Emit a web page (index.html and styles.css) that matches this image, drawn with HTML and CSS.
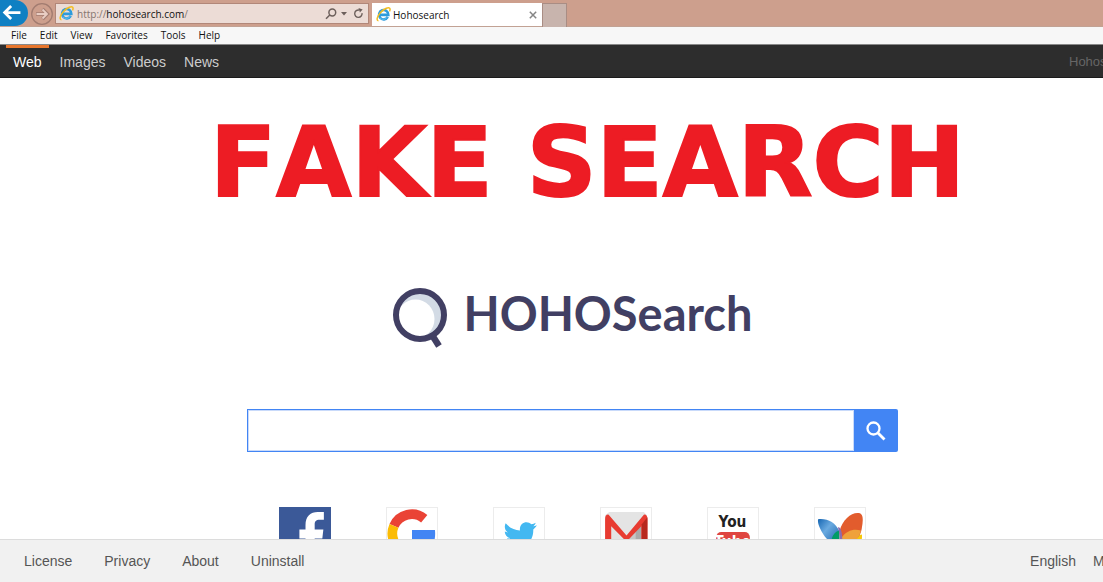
FILE: index.html
```html
<!DOCTYPE html>
<html lang="en">
<head>
<meta charset="utf-8">
<title>Hohosearch</title>
<link rel="stylesheet" href="styles.css">
</head>
<body>
<svg class="defs" aria-hidden="true">
  <defs>
    <symbol id="ie" viewBox="0 0 16 16">
      <path d="M12.6 10.6A5 5 0 1 1 13.2 8.4H4.6" fill="none" stroke="#2d9bdc" stroke-width="2.7"/>
      <path d="M12 10.8A4.9 4.9 0 0 1 4 11.5" fill="none" stroke="#63c3f1" stroke-width="1"/>
      <path d="M2.6 14.6C.2 14.4 1 10.4 4.600 6.200 8.200 2 13.200-.2 14.600 1.400c.7.800.4 2-.2 3.200" fill="none" stroke="#f3bd20" stroke-width="1.600"/>
    </symbol>
  </defs>
</svg>

<header class="chrome">
  <button class="back" aria-label="Back"><svg viewBox="0 0 28 28"><path d="M22 13.500H6M12 6.500l-7 7 7 7" fill="none" stroke="#fff" stroke-width="3"/></svg></button>
  <button class="forward" aria-label="Forward"><svg viewBox="0 0 24 24"><circle cx="12" cy="12" r="10.300" fill="none" stroke="#a27c70" stroke-width="1.300"/><path d="M6 12h11M12.500 7l5 5-5 5" fill="none" stroke="#a27c70" stroke-width="3.400"/><path d="M6.500 12h10M12.500 7.500l4.500 4.500-4.500 4.500" fill="none" stroke="#e8cdc3" stroke-width="1.800"/></svg></button>
  <div class="address">
    <svg class="favicon"><use href="#ie"/></svg>
    <span class="url">http://<b>hohosearch.com</b>/</span>
    <button class="tool search-tool" aria-label="Search"><svg viewBox="0 0 12 12"><circle cx="7.300" cy="4.500" r="3.400"/><path d="M4.800 7L1 10.800"/></svg></button>
    <button class="tool menu-tool" aria-label="Show address list"><svg viewBox="0 0 6 6"><path class="solid" d="M0 1h6L3 4.500z"/></svg></button>
    <button class="tool refresh-tool" aria-label="Refresh"><svg viewBox="0 0 12 12"><path d="M9.800 5.500a4 4 0 1 1-3-3.200"/><path class="solid" d="M6 0l4.500 1.500L7.500 5z"/></svg></button>
  </div>
  <div class="tab">
    <svg class="favicon"><use href="#ie"/></svg>
    <span class="tab-title">Hohosearch</span>
    <button class="tab-close" aria-label="Close tab"><svg viewBox="0 0 8 8"><path d="M.8.8l6.400 6.400M7.200.8L.8 7.200" stroke="#858585" stroke-width="1.500"/></svg></button>
  </div>
  <button class="new-tab" aria-label="New tab"></button>
</header>

<div class="menubar">
  <button>File</button><button>Edit</button><button>View</button><button>Favorites</button><button>Tools</button><button>Help</button>
</div>

<nav class="nav">
  <a class="active" href="#">Web</a><a href="#">Images</a><a href="#">Videos</a><a href="#">News</a>
  <span class="account">Hohosearch</span>
</nav>

<main class="page">
  <h1 class="warning">FAKE SEARCH</h1>
  <div class="content">
    <div class="logo">
      <svg class="logo-mark" viewBox="0 0 56 62">
        <circle cx="28" cy="28" r="22" fill="#d3dbe5"/>
        <ellipse cx="23.500" cy="32" rx="19" ry="19.500" fill="#fff"/>
        <path d="M40 48l7 11" stroke="#413f63" stroke-width="6.500"/>
        <circle cx="28" cy="28" r="24" fill="none" stroke="#413f63" stroke-width="6"/>
      </svg>
      <span>HOHOSearch</span>
    </div>
    <form class="search">
      <input type="text" aria-label="Search the web">
      <button type="button" aria-label="Search"><svg viewBox="0 0 20 20"><circle cx="7.500" cy="7.500" r="6" fill="none" stroke="#fff" stroke-width="2.300"/><path d="M12 12l6.500 6.500" stroke="#fff" stroke-width="2.800"/></svg></button>
    </form>
    <div class="tiles">
      <a href="#" aria-label="Facebook"><svg viewBox="0 0 51 51"><path fill="#3b5998" d="M0 0h51v51H0z"/><path fill="#fff" d="M26 51V31h-6v-9h6v-4C26 9 31 5 38 5h6v7.500h-4c-4 0-5 1.500-5 5V22h8.500l-1 9H35v20z"/></svg></a>
      <a class="framed" href="#" aria-label="Google"><svg viewBox="0 0 51 51"><g fill="none" stroke-width="9.500"><path stroke="#ea4335" d="M7.800 18.500A19 19 0 0 1 37.500 11.500"/><path stroke="#fbbc05" d="M8 34A19 19 0 0 1 7.800 18.500"/><path stroke="#34a853" d="M8 34A19 19 0 0 0 37 41"/></g><path fill="#4285f4" d="M25.500 22.500H48c1 9-1.500 17-8 22l-7-6c3-2 5-4 6-7H25.500z"/></svg></a>
      <a class="framed" href="#" aria-label="Twitter"><svg viewBox="0 0 51 51"><path fill="#43b8f1" d="M43 18c-1.300.6-2.500.9-3.800 1 1.400-.8 2.300-2 2.700-3.500-1.300.8-2.700 1.200-4.200 1.500-4-4.200-12-2-11.300 6-5.500-.3-10.400-2.800-14-7-1.600 3-.9 6.700 2.200 8.900-1.100 0-2.100-.3-3-.8 0 3.200 2.300 5.800 5.300 6.500-1 .3-2 .3-3 .1.900 2.700 3.300 4.500 6.200 4.600C17 38 13 39 9 38.500c15 9 31-1 30.500-16.500 1.400-1 2.600-2.500 3.500-4z"/></svg></a>
      <a class="framed" href="#" aria-label="Gmail"><svg viewBox="0 0 51 51"><path fill="#e4e4e4" d="M9 5h34l3 3v37H5V8z"/><path fill="#aaa" d="M34 22l7-4v27h-7z"/><path fill="#c6c6c6" d="M27 31l8-7v21H27z"/><path fill="#e83b31" d="M5 45V12q0-5 3.500-4.500L26 28 43 7.500q3.500-.5 3.500 4.500v33h-6V19L26 34 11 19v26z"/><path fill="#b7291f" d="M41 17l5.500-7v35H41z"/></svg></a>
      <a class="framed" href="#" aria-label="YouTube"><svg viewBox="0 0 51 51"><rect x="9" y="24.500" width="33" height="23" rx="5" fill="#df4540"/><text class="yt-you" x="25" y="20">You</text><text class="yt-tube" x="25" y="39">Tube</text></svg></a>
      <a class="framed" href="#" aria-label="MSN"><svg viewBox="0 0 51 51">
        <defs><linearGradient id="blue" x2="1" y2="1"><stop stop-color="#1767b3"/><stop offset=".4" stop-color="#6aaae0"/><stop offset="1" stop-color="#155fa8"/></linearGradient></defs>
        <path fill="url(#blue)" d="M4 12c9-1 17 3 21 12l-5 13C16 36 9 28 6 21 4.500 18 3.500 15 4 12z"/>
        <path fill="#009c66" d="M25 23c-5 1-8 6-8 12l8 4z"/>
        <path fill="#f6c80a" d="M47 27c1 10-6 16-17 13l3-10z"/>
        <path fill="#e25c2d" d="M25 24C28 12 37 5 44 6c5 1 4 8 3 14-1 8-5 15-21 15z"/>
        <path fill="#efa13b" d="M27 30c5-7 12-9 19-7-2 9-8 14-18 13z"/>
        <path fill="#8c6db0" d="M23.500 20c3-1 5 7 4 18h-4c2-7 2-11 0-18z"/>
      </svg></a>
    </div>
  </div>
</main>

<footer class="footer">
  <a href="#">License</a><a href="#">Privacy</a><a href="#">About</a><a href="#">Uninstall</a>
  <a class="language" href="#">English</a><a class="more" href="#">More</a>
</footer>
</body>
</html>
```

FILE: styles.css
```css
* { box-sizing: border-box; }

body {
  display: flex;
  flex-direction: column;
  height: 100vh;
  margin: 0;
  overflow: hidden;
  background: #fff;
  font: 14px/20px "Liberation Sans", Arial, sans-serif;
}

button {
  margin: 0;
  padding: 0;
  border: 0;
  background: none;
  color: inherit;
  font: inherit;
}

a { text-decoration: none; }
svg { display: block; }
.defs { position: absolute; width: 0; height: 0; }

.chrome {
  display: flex;
  flex: none;
  height: 27px;
  background: #cd9f8d;
  border-bottom: 1px solid #c2a294;
  color: #111;
  font: 10px/20px "Open Sans", "Noto Sans", sans-serif;
}

.back {
  width: 28px;
  height: 26px;
  border-radius: 0 14px 14px 0;
  background: #0f80c3;
  overflow: hidden;
}
.back svg { width: 26px; height: 26px; }
.forward { width: 24px; margin: 1px 1px 0 2px; }
.forward svg { width: 24px; height: 24px; }

.address {
  display: flex;
  align-items: center;
  width: 314px;
  height: 21px;
  margin: 3px 3px 0 0;
  padding: 0 4px 0 3px;
  border: 1px solid #b18779;
  background: #ecdcd6;
}
.favicon { flex: none; width: 15px; height: 15px; }
.url { flex: 1; margin-left: 3px; color: #85756f; }
.url b { color: #111; font-weight: 400; }
.tool svg { width: 100%; fill: none; stroke: #6c5f5b; stroke-width: 1.5; }
.tool .solid { fill: #6c5f5b; stroke: none; }
.search-tool { width: 12px; }
.menu-tool { width: 6px; margin: 0 6px 0 4px; }
.refresh-tool { width: 11px; }

.tab {
  display: flex;
  align-items: center;
  width: 170px;
  height: 23px;
  margin-top: 3px;
  padding: 0 5px 0 4px;
  background: #fff;
}
.tab-title { flex: 1; margin-left: 2px; }
.tab-close svg { width: 8px; height: 8px; }
.new-tab {
  width: 25px;
  height: 24px;
  margin-top: 3px;
  border: 1px solid #a98d84;
  border-bottom: 0;
  background: #c8b4ad;
}

.menubar {
  display: flex;
  flex: none;
  gap: 13px;
  height: 18px;
  padding-left: 11px;
  background: #f7f7f7;
  border-bottom: 1px solid #888;
  color: #111;
  font: 10px/17px "Open Sans", "Noto Sans", sans-serif;
}

.nav {
  display: flex;
  flex: none;
  gap: 18px;
  height: 33px;
  padding-left: 13px;
  border-bottom: 1px solid #1b1b1b;
  background: #2d2d2d;
}
.nav a { color: #ccc; line-height: 34px; }
.nav .active {
  margin: 0 -7px;
  padding: 0 7px;
  border-top: 3px solid #e8762c;
  color: #fff;
  line-height: 28px;
}
.account {
  width: 34px;
  margin-left: auto;
  color: #666;
  font-size: 13px;
  line-height: 34px;
  white-space: nowrap;
}

.page { flex: 1; min-height: 0; overflow: hidden; }
.warning {
  margin: 35px 0 0;
  padding-left: 72px;
  color: #ed1c24;
  font: 700 97px/100px "DejaVu Sans", Verdana, sans-serif;
  font-kerning: none;
  text-align: center;
  white-space: nowrap;
  -webkit-text-stroke: 2px #ed1c24;
}
.content {
  display: flex;
  flex-direction: column;
  align-items: center;
  padding-left: 42px;
}
.logo {
  display: flex;
  gap: 15px;
  height: 62px;
  margin-top: 74px;
  color: #413f63;
  font: 700 47px/52px Lato, sans-serif;
}
.logo-mark { width: 56px; height: 62px; }

.search { display: flex; width: 651px; height: 43px; margin-top: 60px; }
.search input {
  flex: 1;
  min-width: 0;
  padding: 0 12px;
  border: 1px solid #4285f4;
  border-right: 0;
  border-radius: 0;
  outline: 0;
  background: #fff;
  box-shadow: inset 0 0 0 1px #c9dafa;
  font: 18px "Liberation Sans", sans-serif;
}
.search button {
  display: flex;
  align-items: center;
  justify-content: center;
  width: 44px;
  border-radius: 0 2px 2px 0;
  background: #4285f4;
}
.search button svg { width: 20px; height: 20px; }

.tiles { display: flex; gap: 55px; margin-top: 55px; }
.tiles a { width: 52px; height: 52px; }
.tiles .framed { box-shadow: inset 0 0 0 1px #ececec; }
.tiles text { font: 700 15px "Liberation Sans Narrow", "DejaVu Sans Condensed", sans-serif; text-anchor: middle; }
.yt-you { fill: #222; }
.yt-tube { fill: #fff; }

.footer {
  display: flex;
  flex: none;
  gap: 32px;
  height: 43px;
  padding-left: 24px;
  border-top: 1px solid #dcdcdc;
  background: #f1f1f1;
  line-height: 42px;
}
.footer a { color: #555; }
.footer .language { margin-left: auto; margin-right: -15px; }
.footer .more { width: 10px; }
```
